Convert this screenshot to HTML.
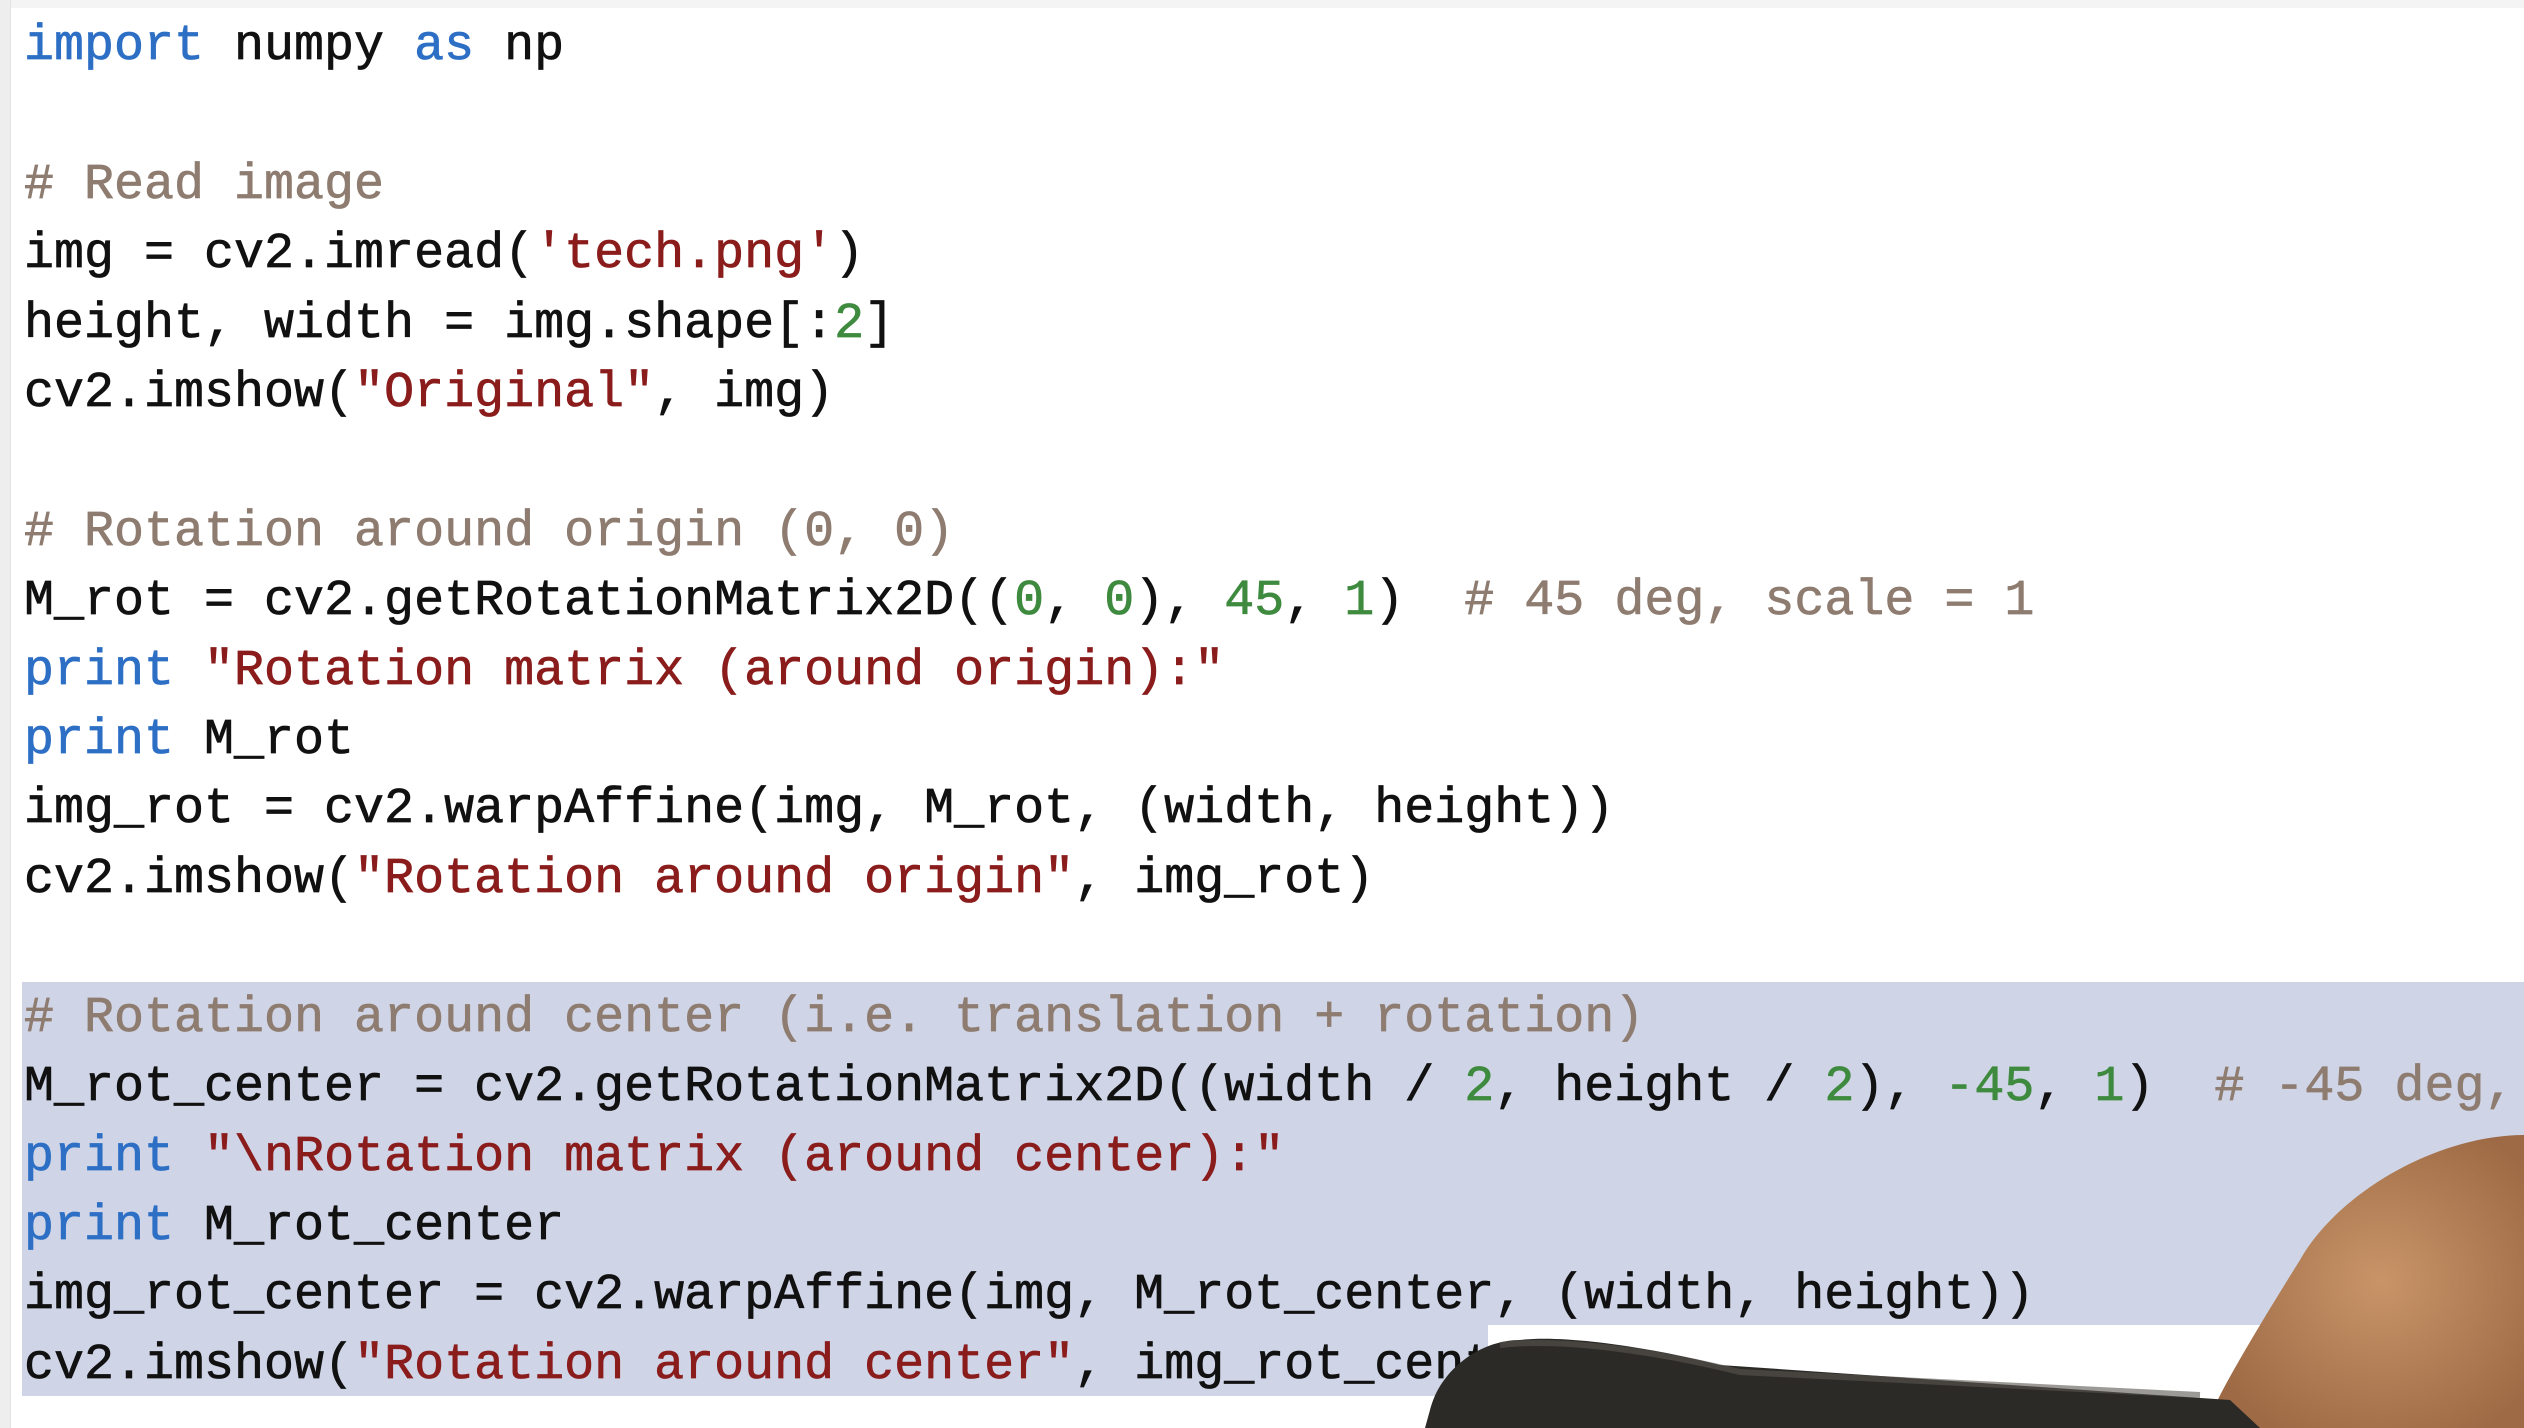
<!DOCTYPE html>
<html><head><meta charset="utf-8"><style>
html,body{margin:0;padding:0;}
body{width:2524px;height:1428px;overflow:hidden;background:#fff;position:relative;}
.gut{position:absolute;left:0;top:0;width:10px;height:1428px;background:#eeeeee;border-right:1px solid #e2e2e2;}
.top{position:absolute;left:0;top:0;width:2524px;height:8px;background:#f4f4f4;}
.hl{position:absolute;background:#cfd5e6;}
pre{position:absolute;left:24px;top:12px;width:2500px;overflow:hidden;margin:0;font-family:"Liberation Mono",monospace;font-size:50px;line-height:69.4px;color:#111;-webkit-text-stroke:0.7px currentColor;}
.k{color:#2d6fc4}.c{color:#8e7c70}.s{color:#8a1c1c}.n{color:#3e8a3e}
svg{position:absolute;left:0;top:0;}
</style></head><body>
<div class="top"></div>
<div class="gut"></div>
<div class="hl" style="left:22px;top:982px;width:2502px;height:343px"></div>
<div class="hl" style="left:22px;top:1325px;width:1466px;height:71px"></div>
<pre><span class="k">import</span> numpy <span class="k">as</span> np

<span class="c"># Read image</span>
img = cv2.imread(<span class="s">'tech.png'</span>)
height, width = img.shape[:<span class="n">2</span>]
cv2.imshow(<span class="s">"Original"</span>, img)

<span class="c"># Rotation around origin (0, 0)</span>
M_rot = cv2.getRotationMatrix2D((<span class="n">0</span>, <span class="n">0</span>), <span class="n">45</span>, <span class="n">1</span>)  <span class="c"># 45 deg, scale = 1</span>
<span class="k">print</span> <span class="s">"Rotation matrix (around origin):"</span>
<span class="k">print</span> M_rot
img_rot = cv2.warpAffine(img, M_rot, (width, height))
cv2.imshow(<span class="s">"Rotation around origin"</span>, img_rot)

<span class="c"># Rotation around center (i.e. translation + rotation)</span>
M_rot_center = cv2.getRotationMatrix2D((width / <span class="n">2</span>, height / <span class="n">2</span>), <span class="n">-45</span>, <span class="n">1</span>)  <span class="c"># -45 deg,</span>
<span class="k">print</span> <span class="s">"\nRotation matrix (around center):"</span>
<span class="k">print</span> M_rot_center
img_rot_center = cv2.warpAffine(img, M_rot_center, (width, height))
cv2.imshow(<span class="s">"Rotation around center"</span>, img_rot_center)</pre>
<svg width="2524" height="1428">
<defs><radialGradient id="sk" cx="0.55" cy="0.5" r="0.6"><stop offset="0" stop-color="#c99468"/><stop offset="1" stop-color="#9d6a45"/></radialGradient></defs>
<path d="M2524 1135 C2440 1135 2340 1190 2300 1260 C2250 1340 2215 1400 2205 1428 L2524 1428 Z" fill="url(#sk)"/>
<path d="M1430 1410 C1440 1370 1480 1340 1520 1340 C1560 1335 1640 1345 1720 1365 L2230 1400 L2260 1428 L1425 1428 Z" fill="#2c2a27"/>
<path d="M1500 1345 C1560 1338 1650 1350 1740 1372 L2200 1395" stroke="#5a5650" stroke-width="6" fill="none" opacity="0.6"/>
</svg>
</body></html>
